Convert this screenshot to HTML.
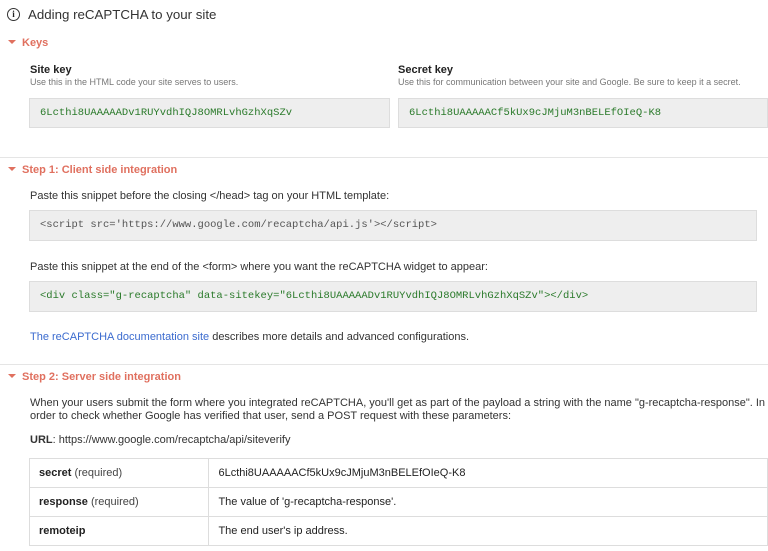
<!DOCTYPE html><html><head><style>
body{margin:0;width:768px;height:551px;overflow:hidden;background:#fff;font-family:"Liberation Sans",sans-serif;color:#222;position:relative}
.a{position:absolute;white-space:nowrap}
.h{font-size:11px;font-weight:bold;color:#e0705f}
.h:before{content:"";display:inline-block;border:4px solid transparent;border-top:4px solid #e0705f;border-bottom:0;margin:0 6px 2px 0;vertical-align:middle}
.t{font-size:11px;color:#333}
.box{position:absolute;background:#eee;border:1px solid #ddd;box-sizing:border-box;font-family:"Liberation Mono",monospace;font-size:10.5px;padding-left:10px;line-height:28px;white-space:nowrap}
.g{color:#2a7a2a}.k{color:#555}
.hr{position:absolute;left:0;width:768px;height:1px;background:#e5e5e5}
table{position:absolute;left:29px;top:458px;border-collapse:collapse;font-size:11px;color:#222}
td{border:1px solid #ddd;height:29px;padding:0 9px;box-sizing:border-box}
</style></head><body>
<div class="a" style="left:7px;top:8px;width:13px;height:13px;border:1.6px solid #333;border-radius:50%;box-sizing:border-box;font:bold 9px 'Liberation Serif',serif;text-align:center;line-height:10px">i</div>
<div class="a" style="left:28px;top:7px;font-size:13.3px;color:#333">Adding reCAPTCHA to your site</div>
<div class="a h" style="left:8px;top:37px">Keys</div>
<div class="a" style="left:30px;top:64px;font-size:11px;font-weight:bold">Site key</div>
<div class="a" style="left:30px;top:77px;font-size:9px;color:#777">Use this in the HTML code your site serves to users.</div>
<div class="box g" style="left:29px;top:98px;width:361px;height:30px">6Lcthi8UAAAAADv1RUYvdhIQJ8OMRLvhGzhXqSZv</div>
<div class="a" style="left:398px;top:64px;font-size:11px;font-weight:bold">Secret key</div>
<div class="a" style="left:398px;top:77px;font-size:9px;color:#777">Use this for communication between your site and Google. Be sure to keep it a secret.</div>
<div class="box g" style="left:398px;top:98px;width:370px;height:30px">6Lcthi8UAAAAACf5kUx9cJMjuM3nBELEfOIeQ-K8</div>
<div class="hr" style="top:157px"></div>
<div class="a h" style="left:8px;top:164px">Step 1: Client side integration</div>
<div class="a t" style="left:30px;top:190px">Paste this snippet before the closing &lt;/head&gt; tag on your HTML template:</div>
<div class="box k" style="left:29px;top:210px;width:728px;height:31px">&lt;script src='https://www.google.com/recaptcha/api.js'&gt;&lt;/script&gt;</div>
<div class="a t" style="left:30px;top:261px">Paste this snippet at the end of the &lt;form&gt; where you want the reCAPTCHA widget to appear:</div>
<div class="box g" style="left:29px;top:281px;width:728px;height:31px">&lt;div class="g-recaptcha" data-sitekey="6Lcthi8UAAAAADv1RUYvdhIQJ8OMRLvhGzhXqSZv"&gt;&lt;/div&gt;</div>
<div class="a t" style="left:30px;top:331px"><span style="color:#3b6bcf">The reCAPTCHA documentation site</span> describes more details and advanced configurations.</div>
<div class="hr" style="top:364px"></div>
<div class="a h" style="left:8px;top:371px">Step 2: Server side integration</div>
<div class="a t" style="left:30px;top:397px;line-height:13px">When your users submit the form where you integrated reCAPTCHA, you'll get as part of the payload a string with the name "g-recaptcha-response". In<br>order to check whether Google has verified that user, send a POST request with these parameters:</div>
<div class="a t" style="left:30px;top:434px"><b>URL</b>: https://www.google.com/recaptcha/api/siteverify</div>
<table>
<tr><td style="width:180px"><b>secret</b> <span style="color:#444">(required)</span></td><td style="width:560px">6Lcthi8UAAAAACf5kUx9cJMjuM3nBELEfOIeQ-K8</td></tr>
<tr><td><b>response</b> <span style="color:#444">(required)</span></td><td>The value of 'g-recaptcha-response'.</td></tr>
<tr><td><b>remoteip</b></td><td>The end user's ip address.</td></tr>
</table>
</body></html>
